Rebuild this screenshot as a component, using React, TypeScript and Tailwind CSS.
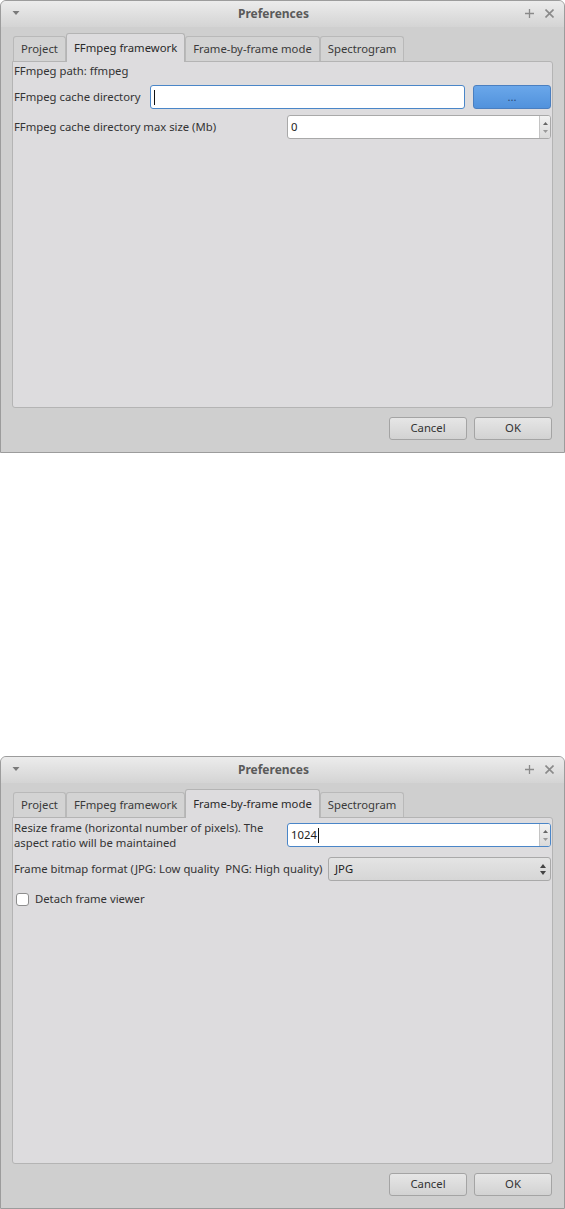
import React from "react";

const TABS = ["Project", "FFmpeg framework", "Frame-by-frame mode", "Spectrogram"];

function TitleBar() {
  return (
    <div className="relative flex h-[26px] items-center justify-center rounded-t-[5px] bg-gradient-to-b from-[#ececec] to-[#d4d4d4] pr-[18px]">
      <svg className="absolute left-[11px] top-[9px]" width="8" height="6" viewBox="0 0 8 6">
        <path d="M0.5 1 L7.5 1 L4 5 Z" fill="#7a7a7a" />
      </svg>
      <span className="text-[12px] font-bold text-[#5a5a5a]">Preferences</span>
      <svg className="absolute right-[30px] top-[8px]" width="9" height="9" viewBox="0 0 9 9">
        <path d="M4.5 0 V9 M0 4.5 H9" stroke="#8a8a8a" strokeWidth="1.3" />
      </svg>
      <svg className="absolute right-[10px] top-[8px]" width="9" height="9" viewBox="0 0 9 9">
        <path d="M0.5 0.5 L8.5 8.5 M8.5 0.5 L0.5 8.5" stroke="#8a8a8a" strokeWidth="1.6" />
      </svg>
    </div>
  );
}

function Tabs({ active }: { active: number }) {
  return (
    <div className="flex items-end pl-[1px]">
      {TABS.map((t, i) =>
        i === active ? (
          <div
            key={t}
            className="relative z-10 -mb-px flex h-[29px] items-center rounded-t-[3px] border border-b-0 border-[#b4b4b4] bg-[#dddcde] px-[7px] text-[#2a2a2a]"
          >
            {t}
          </div>
        ) : (
          <div
            key={t}
            className="flex h-[25px] items-center rounded-t-[3px] border border-b-0 border-[#b9b9b9] bg-[#d3d3d3] px-[7px] text-[#3a3a3a]"
          >
            {t}
          </div>
        )
      )}
    </div>
  );
}

function SpinArrows() {
  return (
    <div className="flex w-[11px] flex-col items-center justify-center gap-[5px] border-l border-[#c4c4c4] bg-gradient-to-b from-[#f2f2f2] to-[#dadada]">
      <svg width="5" height="3" viewBox="0 0 5 3">
        <path d="M0 3 L2.5 0 L5 3 Z" fill="#666" />
      </svg>
      <svg width="5" height="3" viewBox="0 0 5 3">
        <path d="M0 0 L5 0 L2.5 3 Z" fill="#999" />
      </svg>
    </div>
  );
}

function SpinBox({ value, focused }: { value: string; focused?: boolean }) {
  return (
    <div
      className={
        focused
          ? "flex h-[24px] overflow-hidden rounded-[3px] border border-[#4a86c8] bg-white"
          : "flex h-[24px] overflow-hidden rounded-[3px] border border-[#a9a9a9] bg-white"
      }
    >
      <div className="flex flex-1 items-center pl-[3px] text-[#222]">
        {value}
        {focused && <span className="ml-px h-[15px] w-px bg-[#111]" />}
      </div>
      <SpinArrows />
    </div>
  );
}

function Footer() {
  return (
    <div className="flex justify-end gap-[7px] pb-[12px] pr-[12px] pt-[9px]">
      {["Cancel", "OK"].map((b) => (
        <div
          key={b}
          className="flex h-[23px] w-[78px] items-center justify-center rounded-[3px] border border-[#a4a4a4] bg-gradient-to-b from-[#e6e6e6] to-[#d2d2d2] text-[#333]"
        >
          {b}
        </div>
      ))}
    </div>
  );
}

function Dialog({ active, children }: { active: number; children: React.ReactNode }) {
  return (
    <div className="flex h-[453px] flex-col rounded-t-[6px] border border-[#9c9c9c] bg-[#cfcfcf] text-[11.3px] text-[#333]">
      <TitleBar />
      <div className="flex flex-1 flex-col px-[11px] pt-[6px]">
        <Tabs active={active} />
        <div className="flex-1 rounded-b-[3px] rounded-tr-[3px] border border-[#b4b4b4] bg-[#dddcde] px-[1px]">
          {children}
        </div>
      </div>
      <Footer />
    </div>
  );
}

export default function App() {
  return (
    <div className="w-[565px] bg-white font-['Noto_Sans',sans-serif]">
      <Dialog active={1}>
        <div className="flex flex-col">
          <div className="flex h-[19px] items-center">FFmpeg path: ffmpeg</div>
          <div className="mt-[4px] flex h-[24px] items-center">
            <span className="w-[136px]">FFmpeg cache directory</span>
            <div className="flex h-[24px] flex-1 items-center rounded-[3px] border border-[#4a86c8] bg-white pl-[3px]">
              <span className="h-[15px] w-px bg-[#111]" />
            </div>
            <div className="ml-[8px] flex h-[24px] w-[78px] items-center justify-center rounded-[3px] border border-[#4a7fc0] bg-gradient-to-b from-[#6aa7ea] to-[#5192dc] text-[#2a4a7a]">
              ...
            </div>
          </div>
          <div className="mt-[6px] flex h-[24px] items-center">
            <span className="w-[273px]">FFmpeg cache directory max size (Mb)</span>
            <div className="flex-1">
              <SpinBox value="0" />
            </div>
          </div>
        </div>
      </Dialog>
      <div className="h-[303px]" />
      <Dialog active={2}>
        <div className="flex flex-col">
          <div className="mt-[2px] flex items-start">
            <div className="w-[273px] leading-[15px]">
              Resize frame (horizontal number of pixels). The aspect ratio will be maintained
            </div>
            <div className="mt-[3px] flex-1">
              <SpinBox value="1024" focused />
            </div>
          </div>
          <div className="mt-[7px] flex h-[24px] items-center">
            <span className="w-[314px]">Frame bitmap format (JPG: Low quality&nbsp; PNG: High quality)</span>
            <div className="flex h-[24px] flex-1 items-center justify-between rounded-[3px] border border-[#a9a9a9] bg-gradient-to-b from-[#e4e4e4] to-[#d6d6d6] pl-[6px] pr-[4px] text-[#222]">
              JPG
              <div className="flex flex-col items-center gap-[3px]">
                <svg width="6" height="4" viewBox="0 0 6 4">
                  <path d="M0 4 L3 0 L6 4 Z" fill="#444" />
                </svg>
                <svg width="6" height="4" viewBox="0 0 6 4">
                  <path d="M0 0 L6 0 L3 4 Z" fill="#444" />
                </svg>
              </div>
            </div>
          </div>
          <div className="mt-[10px] flex items-center gap-[6px] pl-[2px]">
            <span className="h-[13px] w-[13px] rounded-[3px] border border-[#8e8e8e] bg-white" />
            <span>Detach frame viewer</span>
          </div>
        </div>
      </Dialog>
    </div>
  );
}
